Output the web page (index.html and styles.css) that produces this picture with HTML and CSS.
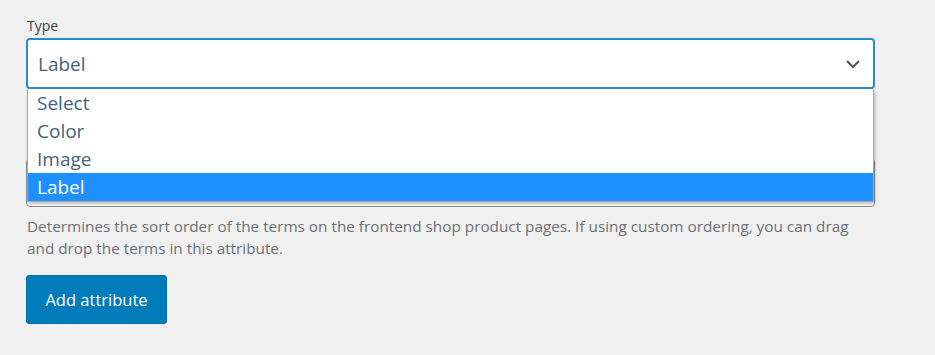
FILE: index.html
```html
<!DOCTYPE html>
<html lang="en">
<head>
<meta charset="utf-8">
<title>Attribute</title>
<link rel="stylesheet" href="styles.css">
</head>
<body>
<div class="form">
  <div class="field field-type">
    <div class="label">Type</div>
    <div class="select is-focused">
      <span class="value">Label</span>
      <svg class="chevron" width="16" height="10" viewBox="0 0 16 10"><path d="M2 2 L8 8 L14 2" fill="none" stroke="#50575e" stroke-width="2"/></svg>
    </div>
    <ul class="dropdown">
      <li class="option">Select</li>
      <li class="option">Color</li>
      <li class="option">Image</li>
      <li class="option is-selected">Label</li>
    </ul>
  </div>
  <div class="field field-order">
    <div class="select"></div>
  </div>
  <p class="description">Determines the sort order of the terms on the frontend shop product pages. If using custom ordering, you can drag and drop the terms in this attribute.</p>
  <button class="button" type="button">Add attribute</button>
</div>
</body>
</html>
```

FILE: styles.css
```css
html, body {
  margin: 0;
  padding: 0;
  background: #f0f0f0;
}
body {
  font-family: "Open Sans", "Noto Sans", sans-serif;
  color: #3c434a;
  width: 935px;
  height: 355px;
  overflow: hidden;
}
.form {
  padding: 16px 0 0 26px;
  width: 849px;
}
.field {
  position: relative;
}
.label {
  font-size: 14px;
  line-height: 20px;
  color: #3c434a;
  margin-left: 1px;
  margin-bottom: 2px;
}
.select {
  height: 48px;
  box-sizing: border-box;
  border: 1px solid #8c8f94;
  border-radius: 4px;
  background: #fff;
  display: flex;
  align-items: center;
  justify-content: space-between;
  padding: 0 12px 0 10px;
  font-size: 19px;
  color: #44637a;
}
.select.is-focused {
  height: 51px;
  border: 2px solid #2b8ac9;
}
.chevron {
  display: block;
  margin-top: 1px;
}
.dropdown {
  position: absolute;
  top: 73px;
  left: 1px;
  right: 1px;
  margin: 0;
  padding: 0;
  list-style: none;
  background: #fff;
  border: 1px solid #a8a8a8;
  border-top: none;
  box-shadow: 1px 2px 3px rgba(0,0,0,0.25);
  z-index: 2;
}
.option {
  height: 28px;
  line-height: 28px;
  padding-left: 9px;
  font-size: 19px;
  color: #44637a;
}
.option.is-selected {
  background: #1e90ff;
  color: #fff;
}
.field-order {
  margin-top: 69px;
}
.field-order .select {
  height: 49px;
}
.description {
  margin: 8px 0 0 1px;
  font-size: 15.3px;
  line-height: 22px;
  color: #6c7075;
  width: 840px;
}
.button {
  margin-top: 16px;
  width: 141px;
  height: 49px;
  border: 1px solid #0073aa;
  border-radius: 3px;
  background: #007cba;
  color: #fff;
  font-family: "Open Sans", "Noto Sans", sans-serif;
  font-size: 16.5px;
  padding: 0;
  cursor: pointer;
}
```
